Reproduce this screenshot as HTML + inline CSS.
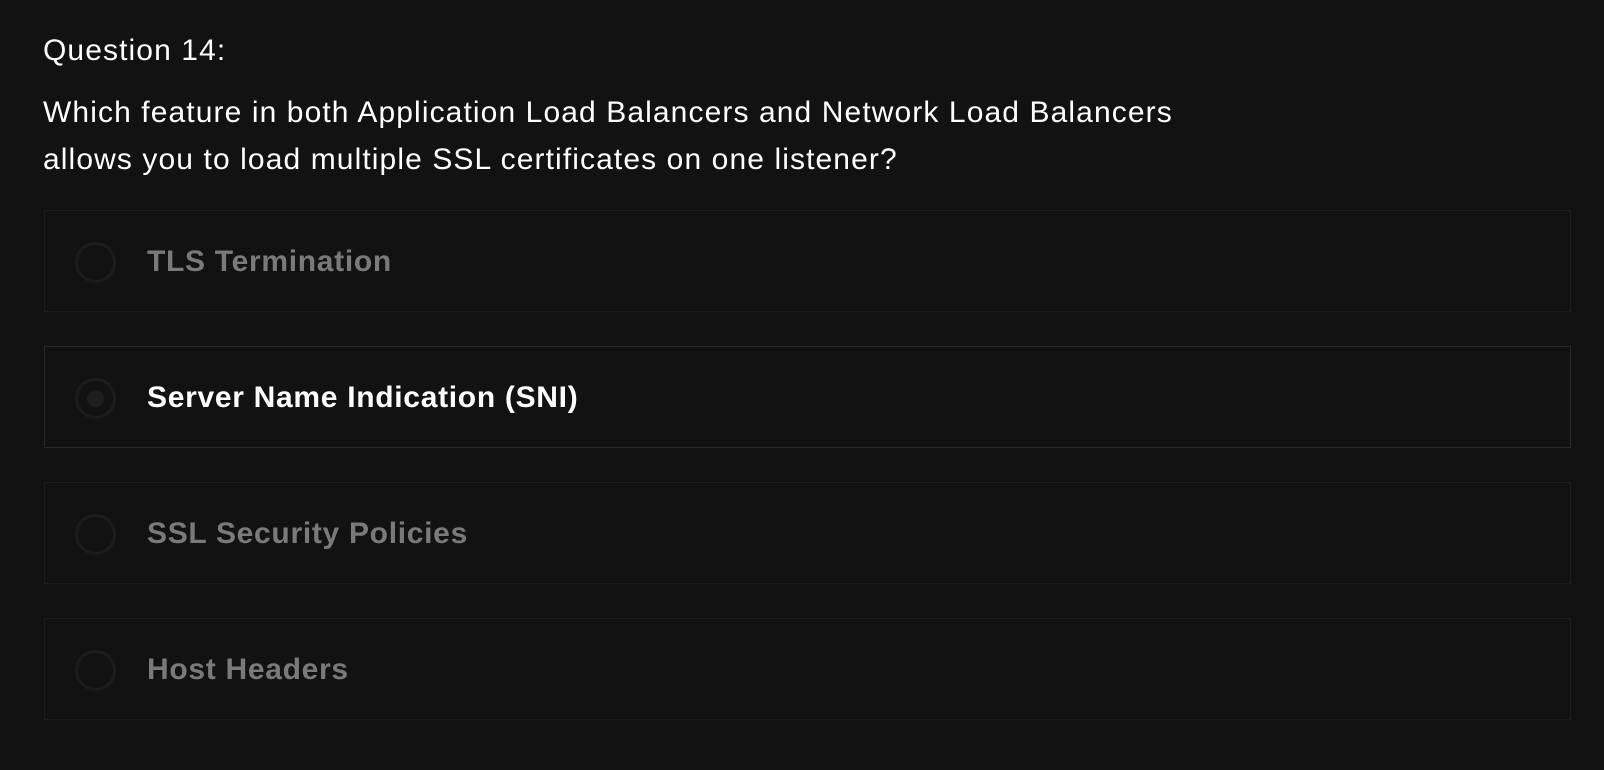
<!DOCTYPE html>
<html><head><meta charset="utf-8"><style>
body{margin:0;background:#121212;width:1604px;height:770px;overflow:hidden;font-family:"Liberation Sans",sans-serif;color:#fff}
.q{position:absolute;left:43px;font-size:30px;letter-spacing:1.1px;white-space:nowrap}
.opt{position:absolute;left:44px;width:1525px;height:100px;border:1px solid #1e1e1e}
.opt.sel{border-color:#2a2a2a}
.r{position:absolute;left:30px;top:31px;width:35px;height:35px;border:3px solid #1c1c1c;border-radius:50%}
.r i{position:absolute;left:9px;top:9px;width:17px;height:17px;border-radius:50%;background:#1e1e1e}
.t{position:absolute;left:102px;top:34px;font-size:30px;letter-spacing:0.7px;font-weight:bold;color:#7a7a7a;white-space:nowrap}
.sel .t{color:#fff}
</style></head><body>
<div class="q" style="top:34px">Question 14:</div>
<div class="q" style="top:96px">Which feature in both Application Load Balancers and Network Load Balancers</div>
<div class="q" style="top:143px">allows you to load multiple SSL certificates on one listener?</div>
<div class="opt" style="top:210px"><div class="r"></div><div class="t">TLS Termination</div></div>
<div class="opt sel" style="top:346px"><div class="r"><i></i></div><div class="t">Server Name Indication (SNI)</div></div>
<div class="opt" style="top:482px"><div class="r"></div><div class="t">SSL Security Policies</div></div>
<div class="opt" style="top:618px"><div class="r"></div><div class="t">Host Headers</div></div>
</body></html>
